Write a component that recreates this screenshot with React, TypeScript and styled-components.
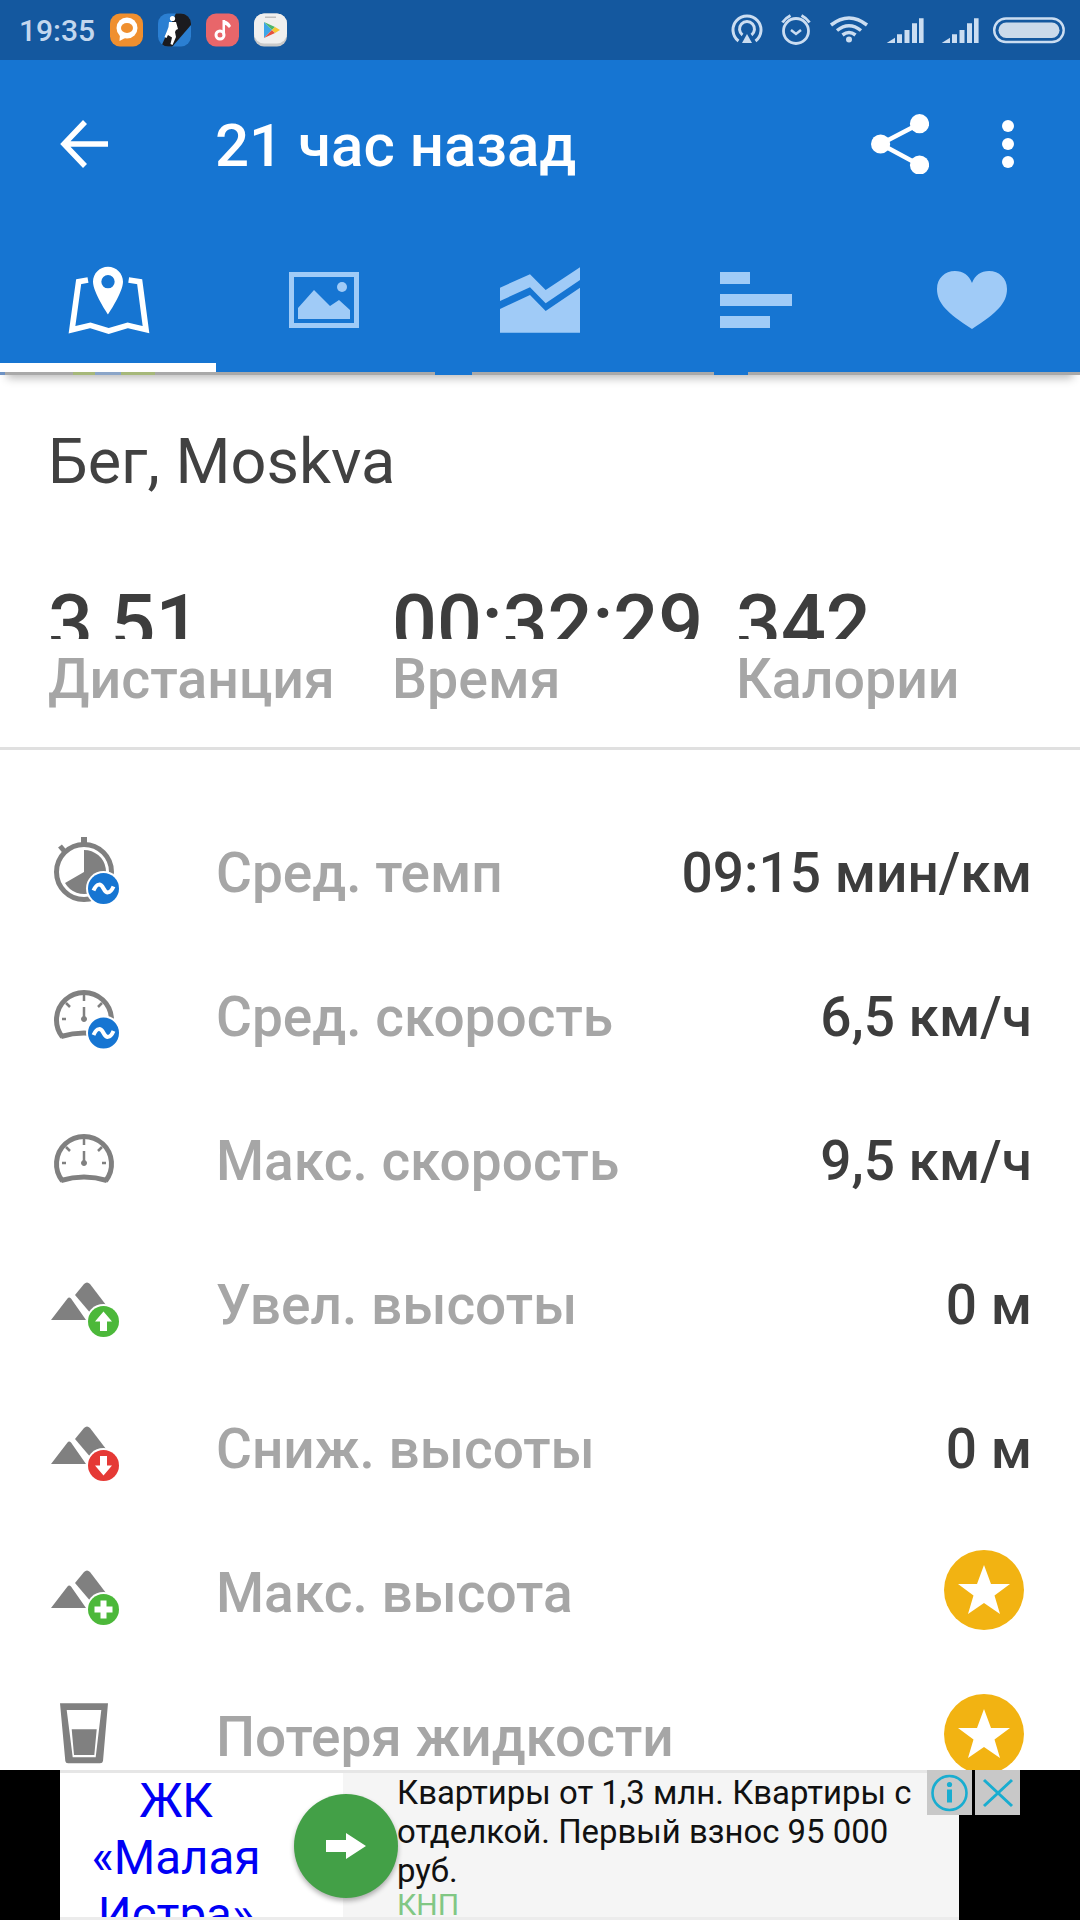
import React from 'react';
import styled, { createGlobalStyle } from 'styled-components';

const GlobalStyle = createGlobalStyle`
  html, body {
    margin: 0;
    padding: 0;
    background: #fff;
  }
  body {
    font-family: Roboto, "Noto Sans", sans-serif;
  }
`;

const Page = styled.div`
  width: 1080px;
  height: 1920px;
  display: flex;
  flex-direction: column;
  overflow: hidden;
  background: #fff;
`;

/* status bar */
const StatusBar = styled.div`
  height: 60px;
  flex: none;
  display: flex;
  align-items: center;
  padding: 0 15px 0 19px;
  background: #14589f;
  color: #c3d7ee;
`;

const Clock = styled.span`
  font-size: 30px;
  font-weight: 500;
  width: 91px;
`;

const AppIcons = styled.div`
  display: flex;
  gap: 15px;
  flex: 1;
`;

const SystemIcons = styled.div`
  display: flex;
  align-items: center;
  gap: 16px;
  svg {
    display: block;
    fill: none;
    stroke: #cbddf1;
  }
`;

const BatteryIcon = styled.svg`
  margin-left: -2px;
`;

/* app bar */
const AppBar = styled.header`
  position: relative;
  z-index: 1;
  flex: none;
  background: #1675d2;
  box-shadow: 0 10px 9px -7px rgba(0, 0, 0, 0.28);
`;

const Toolbar = styled.div`
  height: 168px;
  display: flex;
  align-items: center;
  padding: 0 66px 0 60px;
  color: #fff;
  svg {
    display: block;
  }
`;

const Title = styled.h1`
  flex: 1;
  margin: 4px 0 0 107px;
  font-size: 60px;
  font-weight: 500;
  line-height: 66px;
`;

const ShareButton = styled.div`
  margin-right: 73px;
`;

const Tabs = styled.nav`
  height: 144px;
  display: grid;
  grid-template-columns: repeat(5, 216px);
`;

const Tab = styled.div<{ $active?: boolean }>`
  display: flex;
  align-items: center;
  justify-content: center;
  box-sizing: border-box;
  color: ${p => (p.$active ? '#fff' : '#a0cbf7')};
  border-bottom: 9px solid ${p => (p.$active ? '#fff' : 'transparent')};
  padding-top: 9px;
  svg {
    display: block;
  }
`;

const MapPeek = styled.div`
  height: 3px;
  background: linear-gradient(
    90deg,
    #6f93c4 0 5px,
    #a9a9a9 5px 73px,
    #a6b87a 73px 95px,
    #8ba5c8 95px 121px,
    #a6b87a 121px 155px,
    #a9a9a9 155px 435px,
    #1675d2 435px 472px,
    #a9a9a9 472px 714px,
    #1675d2 714px 748px,
    #a9a9a9 748px
  );
`;

/* content */
const Content = styled.main`
  flex: 1;
  min-height: 0;
  overflow: hidden;
`;

const Heading = styled.h2`
  margin: 0;
  padding: 52px 48px 0;
  font-size: 63px;
  font-weight: 400;
  line-height: 70px;
  color: #414141;
`;

const Stats = styled.section`
  display: grid;
  grid-template-columns: 344px 344px 1fr;
  margin-top: 93px;
  padding: 0 0 37px 48px;
  border-bottom: 3px solid #e0e0e0;
`;

const StatValue = styled.div`
  height: 49px;
  overflow: hidden;
  font-size: 79px;
  font-weight: 500;
  line-height: 68px;
  color: #3d3d3d;
`;

const StatLabel = styled.div`
  margin-top: 11px;
  font-size: 55.5px;
  font-weight: 500;
  line-height: 60px;
  color: #a6a6a6;
`;

const MetricList = styled.section`
  padding-top: 51px;
`;

const MetricRow = styled.div`
  height: 144px;
  display: grid;
  grid-template-columns: 168px 1fr auto;
  align-items: center;
  padding: 0 48px 0 48px;
  svg {
    display: block;
  }
`;

const MetricLabel = styled.span`
  font-size: 55px;
  font-weight: 500;
  color: #a6a6a6;
`;

const MetricValue = styled.span`
  font-size: 55px;
  font-weight: 500;
  color: #3d3d3d;
`;

const PremiumStar = styled.svg`
  margin: 0 8px 6px 0;
`;

/* ad */
const AdBar = styled.aside`
  position: relative;
  flex: none;
  height: 150px;
  padding-left: 60px;
  background: #000;
`;

const AdCard = styled.div`
  width: 899px;
  height: 150px;
  box-sizing: border-box;
  display: flex;
  border-top: 3px solid #e6e6e6;
  border-bottom: 3px solid #ececec;
  overflow: hidden;
`;

const AdName = styled.div`
  width: 283px;
  box-sizing: border-box;
  flex: none;
  background: #fff;
  padding-right: 51px;
  color: #0000f5;
  font-size: 47.5px;
  line-height: 57px;
  text-align: center;
`;

const AdBody = styled.div`
  flex: 1;
  padding: 0 30px 0 54px;
  background: #f5f5f5;
  color: #111;
  font-size: 32.9px;
  line-height: 39px;
`;

const AdSource = styled.div`
  color: #81c784;
  font-size: 30px;
  line-height: 30px;
`;

const AdGo = styled.div`
  position: absolute;
  left: 294px;
  top: 24px;
  width: 104px;
  height: 104px;
  display: flex;
  align-items: center;
  justify-content: center;
  border-radius: 50%;
  background: #43a047;
  box-shadow: 0 3px 5px rgba(0, 0, 0, 0.3);
`;

const AdControls = styled.div`
  position: absolute;
  left: 927px;
  top: 0;
  display: flex;
  gap: 3px;
`;

const AdControl = styled.div`
  width: 45px;
  height: 45px;
  background: #c8c8c8;
  svg {
    display: block;
  }
`;

const clip = 'runnerClip';

const Squircle = ({ children }: { children: React.ReactNode }) => (
  <svg width="33" height="34" viewBox="0 0 33 34">
    {children}
  </svg>
);

const gaugeDial = (
  <g fill="none" stroke="#808080">
    <path d="M14.4 56A27.5 27.5 0 1 1 57.6 56" strokeWidth="5" />
    <path d="M13 55.5Q36 48.5 59 55.5" strokeWidth="5" />
    <path d="M36 14V20M14 38H18M54 38H58M18 22L22 26M54 22L50 26M36 26V38" strokeWidth="2.5" />
    <circle cx="36" cy="38" r="2.5" fill="#808080" />
  </g>
);

const Badge = ({ color, y, children }: { color: string; y: number; children: React.ReactNode }) => (
  <g>
    <circle cx="55.5" cy={y} r="17.5" fill="#fff" />
    <circle cx="55.5" cy={y} r="15.5" fill={color} />
    {children}
  </g>
);

const AvgWave = ({ y }: { y: number }) => (
  <path
    d={`M45.5 ${y + 2}C49 ${y - 6} 53 ${y - 5} 55.5 ${y}S62 ${y + 6} 65.5 ${y - 2}`}
    fill="none"
    stroke="#fff"
    strokeWidth="4"
  />
);

const Mountains = ({ children }: { children: React.ReactNode }) => (
  <svg width="72" height="72" viewBox="0 0 72 72">
    <path d="M36 15Q39 12 42 15L58 36L44 46L27 26Z" fill="#808080" />
    <path d="M19.5 29.5Q21 27.5 23 29.5L38 51H3Z" fill="#808080" />
    {children}
  </svg>
);

const CupIcon = () => (
  <svg width="72" height="72" viewBox="0 0 72 72">
    <path
      fillRule="evenodd"
      fill="#808080"
      d="M12 2.3H60L55 60Q54.7 62.3 52 62.3H20Q17.6 62.3 17.3 60ZM18.7 9L24.7 56.3H47.7L53.3 9Z"
    />
    <path d="M23.7 28.3H48.7L46.3 54H26Z" fill="#808080" />
  </svg>
);

const Star = () => (
  <PremiumStar width="80" height="80" viewBox="0 0 80 80">
    <circle cx="40" cy="40" r="40" fill="#f2b312" />
    <path d="M40 15L47 34H66L50.5 45.5L56 64L40 53L24 64L29.5 45.5L14 34H33Z" fill="#fff" />
  </PremiumStar>
);

const metrics: { icon: React.ReactNode; label: string; value?: string }[] = [
  {
    icon: (
      <svg width="72" height="72" viewBox="0 0 72 72">
        <circle cx="36" cy="35" r="27.5" fill="none" stroke="#808080" strokeWidth="5" />
        <rect x="33" y="0" width="6" height="6" fill="#808080" />
        <path d="M12 9l5 6" stroke="#808080" strokeWidth="5" />
        <path d="M36 35V13A22 22 0 1 1 17 46Z" fill="#808080" />
        <Badge color="#1675d2" y={51.5}>
          <AvgWave y={51.5} />
        </Badge>
      </svg>
    ),
    label: 'Сред. темп',
    value: '09:15 мин/км',
  },
  {
    icon: (
      <svg width="72" height="72" viewBox="0 0 72 72">
        {gaugeDial}
        <Badge color="#1675d2" y={52}>
          <AvgWave y={52} />
        </Badge>
      </svg>
    ),
    label: 'Сред. скорость',
    value: '6,5 км/ч',
  },
  {
    icon: (
      <svg width="72" height="72" viewBox="0 0 72 72">
        {gaugeDial}
      </svg>
    ),
    label: 'Макс. скорость',
    value: '9,5 км/ч',
  },
  {
    icon: (
      <Mountains>
        <Badge color="#4cb83a" y={52.5}>
          <path d="M55.5 42.5L64 52.5H59V62H52V52.5H47Z" fill="#fff" />
        </Badge>
      </Mountains>
    ),
    label: 'Увел. высоты',
    value: '0 м',
  },
  {
    icon: (
      <Mountains>
        <Badge color="#e53935" y={52.5}>
          <path d="M55.5 62.5L64 52.5H59V43H52V52.5H47Z" fill="#fff" />
        </Badge>
      </Mountains>
    ),
    label: 'Сниж. высоты',
    value: '0 м',
  },
  {
    icon: (
      <Mountains>
        <Badge color="#4cb83a" y={52.5}>
          <path d="M52.5 43.5H58.5V49.5H64.5V55.5H58.5V61.5H52.5V55.5H46.5V49.5H52.5Z" fill="#fff" />
        </Badge>
      </Mountains>
    ),
    label: 'Макс. высота',
  },
  { icon: <CupIcon />, label: 'Потеря жидкости' },
];

const App = () => {
  return (
    <Page>
      <GlobalStyle />
      <StatusBar>
        <Clock>19:35</Clock>
        <AppIcons>
          <Squircle>
            <rect y="0.5" width="33" height="33" rx="10" fill="#ef8f2f" />
            <circle cx="17" cy="15" r="10.5" fill="#fff" />
            <path d="M10 21L9.5 28L17 24Z" fill="#fff" />
            <ellipse cx="17" cy="15" rx="6" ry="5" fill="#ef8f2f" />
          </Squircle>
          <Squircle>
            <clipPath id={clip}>
              <rect y="0.5" width="33" height="33" rx="10" />
            </clipPath>
            <g clipPath={`url(#${clip})`}>
              <rect width="33" height="34" fill="#2b7fd2" />
              <path d="M18 0H33V12L14 34H3Z" fill="#1b1b1f" />
              <circle cx="14.5" cy="5.5" r="2.6" fill="#fff" />
              <path
                d="M11 9H18L20 16L18 17L17 19L18 24L14.5 32L12.5 31L14 24.5L10 22L8.5 25L6.5 24L9 18L10.5 14Z"
                fill="#fff"
              />
            </g>
          </Squircle>
          <Squircle>
            <rect y="0.5" width="33" height="33" rx="10" fill="#e8666a" />
            <circle cx="14" cy="22" r="4" fill="none" stroke="#fff" strokeWidth="3" />
            <rect x="16.5" y="7" width="2.5" height="15" fill="#fff" />
            <path d="M17 7Q23 8 25 13L23 15Q21 12 17 11Z" fill="#fff" />
          </Squircle>
          <Squircle>
            <rect y="0.5" width="33" height="33" rx="10" fill="#c9c9c9" />
            <rect y="0.5" width="33" height="30" rx="10" fill="#efefef" />
            <rect x="11" y="3.5" width="11" height="1.5" fill="#bdbdbd" />
            <path d="M10 9V25L18 17Z" fill="#3ea6e8" />
            <path d="M10 9L18 17L21 14Z" fill="#4cb56a" />
            <path d="M10 25L18 17L21 20Z" fill="#e4503f" />
            <path d="M21 14L26 17L21 20L18 17Z" fill="#f6c531" />
          </Squircle>
        </AppIcons>
        <SystemIcons>
          <svg width="32" height="34" viewBox="0 0 32 34" strokeWidth="3">
            <path d="M7.5 28A14 14 0 1 1 24.5 28" />
            <path d="M11.5 22A7.5 7.5 0 1 1 20.5 22" />
            <path d="M16 21L21 30H11Z" fill="#cbddf1" stroke="none" />
          </svg>
          <svg width="34" height="34" viewBox="0 0 34 34">
            <circle cx="17" cy="18" r="12.5" strokeWidth="2.8" />
            <path d="M12 17L17 21L22 17" strokeWidth="2.5" />
            <path d="M3.5 9.5Q6.5 5 11.5 2.5M30.5 9.5Q27.5 5 22.5 2.5" strokeWidth="3" />
          </svg>
          <svg width="40" height="34" viewBox="0 0 40 34">
            <path d="M2 12Q20 -2 38 12" strokeWidth="3.5" />
            <path d="M8 17.5Q20 8 32 17.5" strokeWidth="3.5" />
            <path d="M13.5 22Q20 17 26.5 22" strokeWidth="3.5" />
            <circle cx="20" cy="26.5" r="3" fill="#cbddf1" stroke="none" />
          </svg>
          {[0, 1].map(i => (
            <svg key={i} width="39" height="34" viewBox="0 0 39 34">
              <path
                d="M1.7 30L10 24.7V30ZM12 21.3H17V30H12ZM19.5 17H24.5V30H19.5ZM27 10.3H32V30H27ZM34 5.3H38.6V30H34Z"
                fill="#cbddf1"
                stroke="none"
              />
            </svg>
          ))}
          <BatteryIcon width="72" height="34" viewBox="0 0 72 34">
            <rect x="1.2" y="5.5" width="69.5" height="23.5" rx="11.7" strokeWidth="2.4" />
            <rect x="5.5" y="9.5" width="61" height="15.5" rx="7.7" fill="#cbdaea" stroke="none" />
          </BatteryIcon>
        </SystemIcons>
      </StatusBar>

      <AppBar>
        <Toolbar>
          <svg width="48" height="48" viewBox="0 0 48 48" fill="none" stroke="#fff" strokeWidth="5.5">
            <path d="M25 2L4 24L25 46M4 24H48" />
          </svg>
          <Title>21 час назад</Title>
          <ShareButton>
            <svg width="58" height="60" viewBox="0 0 58 60" fill="#fff">
              <circle cx="48.5" cy="9.7" r="9.6" />
              <circle cx="9.6" cy="30" r="9.6" />
              <circle cx="48.5" cy="51" r="9.6" />
              <path d="M48.5 9.7L9.6 30L48.5 51" fill="none" stroke="#fff" strokeWidth="4.5" />
            </svg>
          </ShareButton>
          <svg width="12" height="48" viewBox="0 0 12 48" fill="#fff">
            <circle cx="6" cy="6" r="6" />
            <circle cx="6" cy="24" r="6" />
            <circle cx="6" cy="42" r="6" />
          </svg>
        </Toolbar>
        <Tabs>
          <Tab $active>
            <svg width="130" height="90" viewBox="8 0 390 270">
              <path
                fillRule="evenodd"
                fill="currentColor"
                d="M203 35C178 35 158 55 158 80C158 112 203 178 203 178C203 178 248 112 248 80C248 55 228 35 203 35ZM203 60A20 20 0 1 1 203 100A20 20 0 1 1 203 60Z"
              />
              <path
                d="M143 75L115 80L95 224L150 211L205 228L262 211L317 224L298 80L265 75"
                fill="none"
                stroke="currentColor"
                strokeWidth="17"
              />
            </svg>
          </Tab>
          <Tab>
            <svg width="130" height="90" viewBox="0 0 130 90" fill="currentColor">
              <rect x="32.5" y="19.5" width="65" height="51" fill="none" stroke="currentColor" strokeWidth="5" />
              <path d="M39 64V53L55 35L71 51L80 45L91 55V64Z" />
              <circle cx="83" cy="32" r="5" />
            </svg>
          </Tab>
          <Tab>
            <svg width="130" height="90" viewBox="-15 0 390 270" fill="currentColor">
              <path d="M60 98L150 58L197 105L300 37V75L197 145L150 97L60 138Z" />
              <path d="M60 162L150 120L197 168L300 98V233H60Z" />
            </svg>
          </Tab>
          <Tab>
            <svg width="130" height="90" viewBox="0 0 130 90" fill="currentColor">
              <rect x="29" y="17" width="30" height="12" />
              <rect x="29" y="39" width="72" height="12" />
              <rect x="29" y="61" width="50" height="12" />
            </svg>
          </Tab>
          <Tab>
            <svg width="130" height="90" viewBox="0 0 130 90" fill="currentColor">
              <path d="M65 74C40 58 30 48 30 34C30 23 38 16 48 16C56 16 62 20 65 28C68 20 74 16 82 16C92 16 100 23 100 34C100 48 90 58 65 74Z" />
            </svg>
          </Tab>
        </Tabs>
        <MapPeek />
      </AppBar>

      <Content>
        <Heading>Бег, Moskva</Heading>
        <Stats>
          <div>
            <StatValue>3,51</StatValue>
            <StatLabel>Дистанция</StatLabel>
          </div>
          <div>
            <StatValue>00:32:29</StatValue>
            <StatLabel>Время</StatLabel>
          </div>
          <div>
            <StatValue>342</StatValue>
            <StatLabel>Калории</StatLabel>
          </div>
        </Stats>
        <MetricList>
          {metrics.map(m => (
            <MetricRow key={m.label}>
              {m.icon}
              <MetricLabel>{m.label}</MetricLabel>
              {m.value ? <MetricValue>{m.value}</MetricValue> : <Star />}
            </MetricRow>
          ))}
        </MetricList>
      </Content>

      <AdBar>
        <AdCard>
          <AdName>
            ЖК
            <br />
            «Малая
            <br />
            Истра»
          </AdName>
          <AdBody>
            Квартиры от 1,3 млн. Квартиры с отделкой. Первый взнос 95 000 руб.
            <AdSource>КНП</AdSource>
          </AdBody>
        </AdCard>
        <AdGo>
          <svg width="40" height="26" viewBox="0 0 40 26" fill="#fff">
            <path d="M0 7H20V0L40 13L20 26V19H0Z" />
          </svg>
        </AdGo>
        <AdControls>
          <AdControl>
            <svg width="45" height="45" viewBox="0 0 45 45" fill="none" stroke="#19add0" strokeWidth="2.6">
              <circle cx="22.5" cy="23" r="17" />
              <circle cx="22.5" cy="14.5" r="2.6" fill="#19add0" stroke="none" />
              <rect x="20" y="19.5" width="5" height="13" fill="#19add0" stroke="none" />
            </svg>
          </AdControl>
          <AdControl>
            <svg width="45" height="45" viewBox="0 0 45 45" fill="none" stroke="#19add0" strokeWidth="3">
              <path d="M9 10L37 36M37 10L9 36" />
            </svg>
          </AdControl>
        </AdControls>
      </AdBar>
    </Page>
  );
};

export default App;
